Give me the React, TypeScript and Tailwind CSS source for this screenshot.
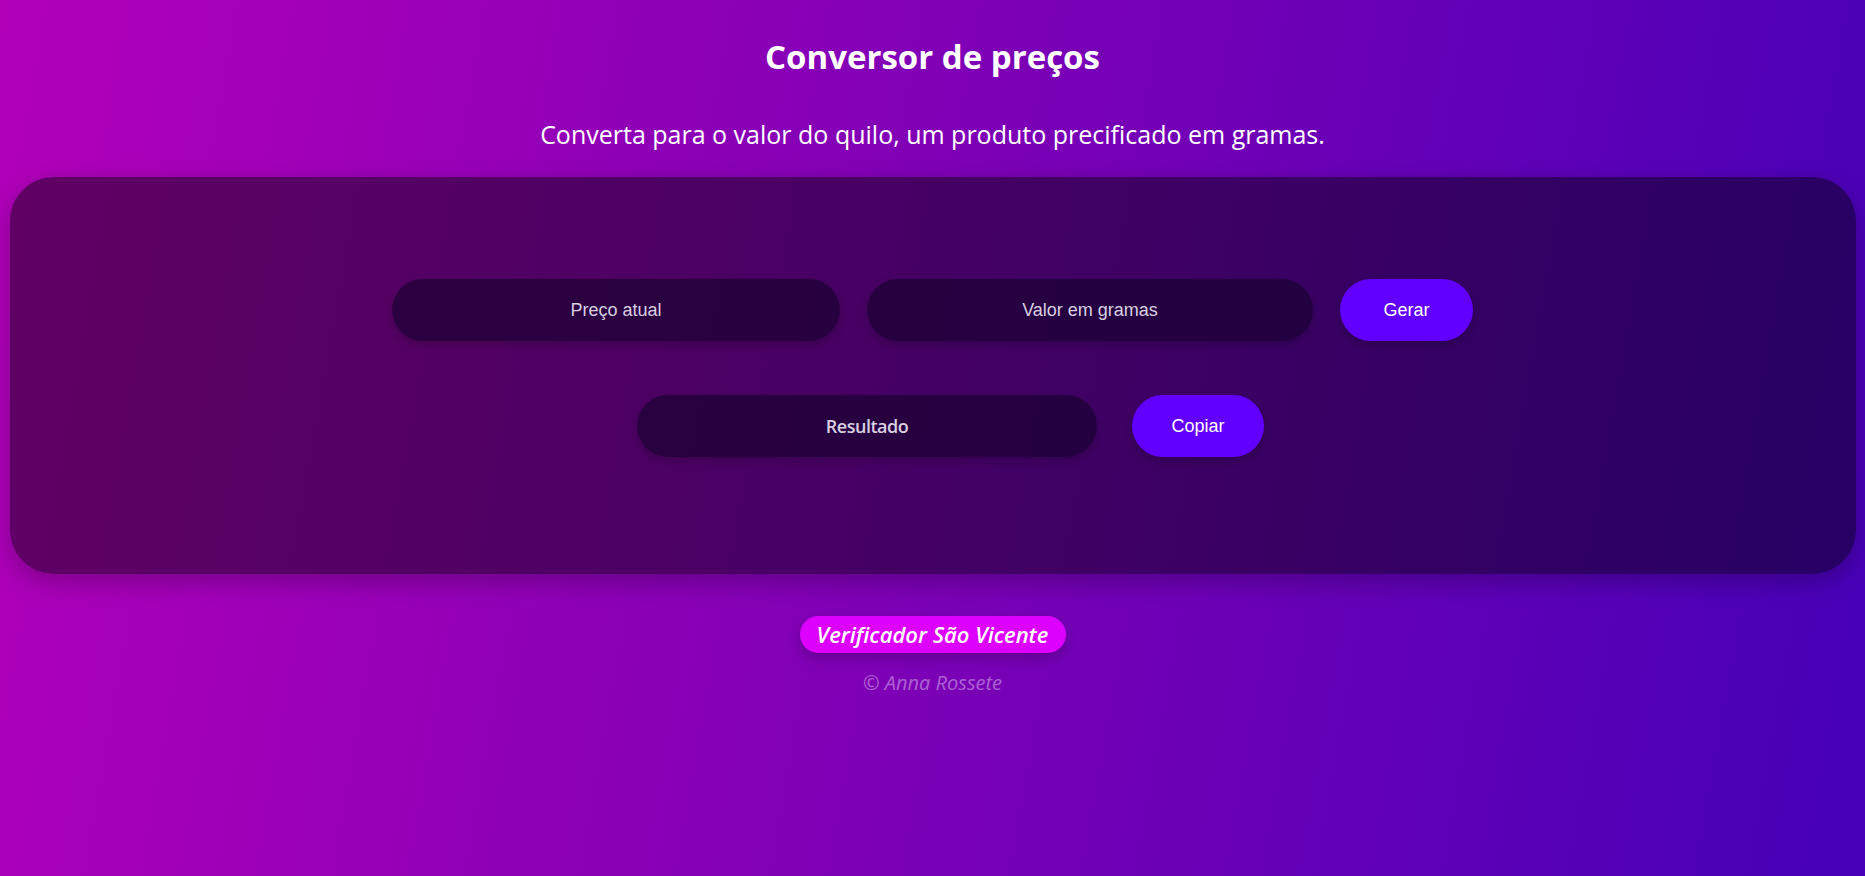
import React from "react";

export default function App() {
  return (
    <div className="min-h-[876px] w-full bg-[linear-gradient(100deg,#b200b9_0%,#7d00b6_50%,#4500b8_100%)] flex flex-col items-center text-white" style={{ fontFamily: '"Open Sans", "Noto Sans", sans-serif' }}>
      <h1 className="mt-[35px] h-[44px] leading-[44px] text-[33px] font-bold">Conversor de preços</h1>
      <p className="mt-[39px] h-[32px] leading-[32px] text-[25px]">Converta para o valor do quilo, um produto precificado em gramas.</p>
      <div className="mt-[27px] w-[calc(100%-19px)] h-[397px] rounded-[44px] bg-black/45 shadow-[0_8px_24px_rgba(0,0,0,0.25)] pt-[102px] flex flex-col items-center">
        <div className="flex items-center gap-[27px]" style={{ fontFamily: '"Liberation Sans", Arial, sans-serif' }}>
          <input
            placeholder="Preço atual"
            className="w-[448px] h-[62px] rounded-full bg-[#1a0030]/70 text-center text-[18px] text-[#d9d0e2] placeholder:text-[#d9d0e2] outline-none shadow-[0_4px_10px_rgba(0,0,0,0.2)]"
          />
          <input
            placeholder="Valor em gramas"
            className="w-[446px] h-[62px] rounded-full bg-[#1a0030]/70 text-center text-[18px] text-[#d9d0e2] placeholder:text-[#d9d0e2] outline-none shadow-[0_4px_10px_rgba(0,0,0,0.2)]"
          />
          <button className="w-[133px] h-[62px] rounded-full bg-[#6200ff] text-[18px] text-white shadow-[0_4px_10px_rgba(0,0,0,0.2)]">Gerar</button>
        </div>
        <div className="mt-[54px] ml-[36px] flex items-center gap-[35px]">
          <div className="w-[460px] h-[62px] rounded-full bg-[#1a0030]/70 flex items-center justify-center text-[18px] font-semibold text-[#d9d0e2] tracking-[-0.5px] shadow-[0_4px_10px_rgba(0,0,0,0.2)]">Resultado</div>
          <button className="w-[132px] h-[62px] rounded-full bg-[#6200ff] text-[18px] text-white shadow-[0_4px_10px_rgba(0,0,0,0.2)]" style={{ fontFamily: '"Liberation Sans", Arial, sans-serif' }}>Copiar</button>
        </div>
      </div>
      <div className="mt-[42px] w-[266px] h-[37px] rounded-full bg-[#de00fe] flex items-center justify-center text-[22px] italic font-semibold shadow-[0_6px_12px_rgba(60,0,90,0.35)]">Verificador São Vicente</div>
      <div className="mt-[16px] h-[28px] leading-[28px] text-[20px] italic text-white/40">© Anna Rossete</div>
    </div>
  );
}
